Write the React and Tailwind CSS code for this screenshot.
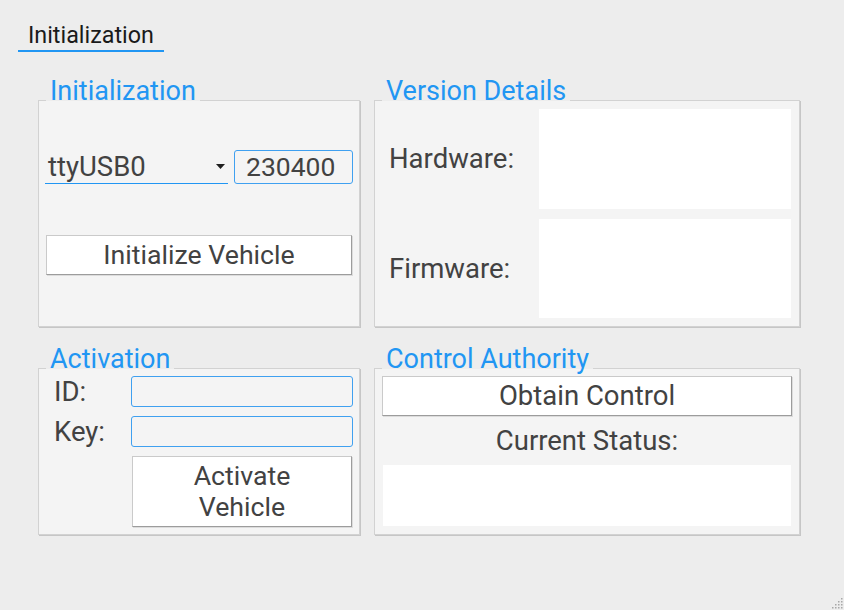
import React from "react";

function Group({ title, className = "", children }) {
  return (
    <div className="flex flex-col">
      <div className="self-start ml-[8px] px-[4px] h-[22px] leading-[24px] text-[27px] text-[#2196f3] bg-[#ededed] relative z-10 -mb-px whitespace-nowrap">
        {title}
      </div>
      <div
        className={
          "border border-[#d2d2d2] bg-[#f4f4f4] shadow-[1px_1px_0_#c6c6c6] " +
          className
        }
      >
        {children}
      </div>
    </div>
  );
}

const btn =
  "bg-white border border-[#cacaca] border-r-[#9c9c9c] border-b-[#9c9c9c] shadow-[1px_1px_0_#dcdcdc] flex items-center justify-center text-center text-[26.7px] text-[#424242]";

export default function App() {
  return (
    <div
      className="w-[844px] h-[610px] bg-[#ededed] relative overflow-hidden text-[#424242]"
      style={{ fontFamily: "Roboto, 'Noto Sans', sans-serif" }}
    >
      {/* Tab bar */}
      <div className="ml-[18px] mt-[18px] w-[146px] h-[34px] pt-[2px] pl-[10px] border-b-2 border-[#2196f3] text-[23.3px] leading-[30px] text-[#1a1a1a] whitespace-nowrap">
        Initialization
      </div>

      <div className="ml-[38px] mt-[27px] grid grid-cols-[322px_426px] gap-x-[14px] gap-y-[20px]">
        {/* Initialization */}
        <Group title="Initialization" className="h-[227px] flex flex-col pt-[49px]">
          <div className="flex pl-[6px] gap-[6px]">
            <div className="relative w-[183px] h-[34px] border-b border-[#2196f3] flex items-center justify-between pl-[3px] pr-[3px] text-[27.5px]">
              <span>ttyUSB0</span>
              <svg width="9" height="5" viewBox="0 0 9 5">
                <path d="M0 0 L9 0 L4.5 5 Z" fill="#1f1f1f" />
              </svg>
            </div>
            <div className="w-[119px] h-[34px] border border-[#3fa0f0] rounded-[3px] flex items-center pl-[11px] text-[26.5px]">
              230400
            </div>
          </div>
          <div className={btn + " mt-[51px] ml-[7px] w-[306px] h-[40px]"}>
            Initialize Vehicle
          </div>
        </Group>

        {/* Version Details */}
        <Group title="Version Details" className="h-[227px] flex flex-col gap-[10px] pt-[8px] pl-[14px] pr-[8px]">
          <div className="flex items-center">
            <div className="flex-1 text-[27.5px]">Hardware:</div>
            <div className="w-[252px] h-[100px] bg-white" />
          </div>
          <div className="flex items-center">
            <div className="flex-1 text-[27.5px]">Firmware:</div>
            <div className="w-[252px] h-[99px] bg-white" />
          </div>
        </Group>

        {/* Activation */}
        <Group title="Activation" className="h-[167px] grid grid-cols-[1fr_222px] content-start gap-y-[9px] pt-[7px] pl-[15px] pr-[6px]">
          <div className="h-[31px] flex items-center text-[27.5px]">ID:</div>
          <div className="h-[31px] border border-[#3fa0f0] rounded-[3px] bg-[#f4f4f4]" />
          <div className="h-[31px] flex items-center text-[27.5px]">Key:</div>
          <div className="h-[31px] border border-[#3fa0f0] rounded-[3px] bg-[#f4f4f4]" />
          <div />
          <div className={btn + " ml-px w-[220px] h-[71px] leading-[31px]"}>
            Activate
            <br />
            Vehicle
          </div>
        </Group>

        {/* Control Authority */}
        <Group title="Control Authority" className="h-[167px] flex flex-col pt-[7px]">
          <div className={btn + " mx-[7px] h-[40px] !text-[27.5px]"}>Obtain Control</div>
          <div className="h-[49px] flex items-center justify-center text-[27.5px]">
            Current Status:
          </div>
          <div className="mx-[8px] h-[61px] bg-white" />
        </Group>
      </div>

      {/* Resize grip */}
      <svg className="absolute right-0 bottom-0" width="14" height="14" viewBox="0 0 14 14">
        {[
          [11, 2],
          [8, 5], [11, 5],
          [5, 8], [8, 8], [11, 8],
          [2, 11], [5, 11], [8, 11], [11, 11],
        ].map(([x, y], i) => (
          <rect key={i} x={x} y={y} width="1.5" height="1.5" fill="#a8a8a8" />
        ))}
      </svg>
    </div>
  );
}
